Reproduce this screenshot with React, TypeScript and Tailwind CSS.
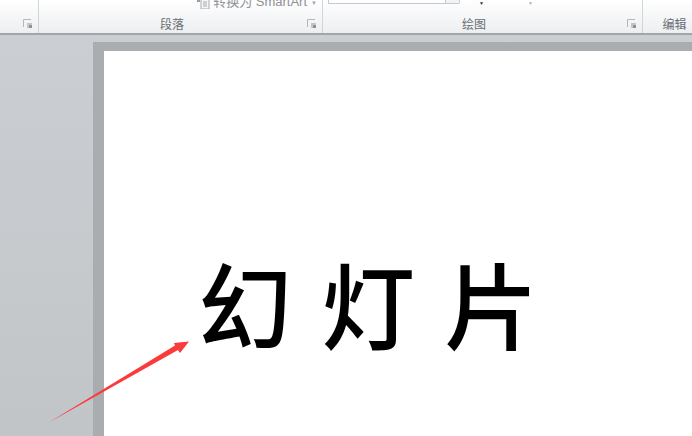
const cjk = "font-['Liberation_Sans','Noto_Sans_CJK_SC',sans-serif]";

function Launcher() {
  return (
    <svg width="10" height="10" viewBox="0 0 10 10" className="shrink-0">
      <path d="M0.5 8V0.5H8" fill="none" stroke="#b5b8bc" strokeWidth="1" />
      <rect x="4" y="4" width="5" height="5" fill="#c4c7ca" />
      <rect x="6" y="6" width="3" height="3" fill="#8f9396" />
    </svg>
  );
}

function GroupLabel({ label, launcher = true, shift = "" }: { label?: string; launcher?: boolean; shift?: string }) {
  return (
    <div className={`relative flex h-[16px] shrink-0 items-center justify-center ${shift}`}>
      {label && <span className="text-[12px] leading-none text-[#6a6f76]">{label}</span>}
      {launcher && (
        <span className="absolute right-[5px] top-[2px] flex">
          <Launcher />
        </span>
      )}
    </div>
  );
}

export default function App() {
  return (
    <div className={`relative flex h-[436px] w-[692px] flex-col overflow-hidden bg-[#c8cbce] ${cjk}`}>
      <header className="flex h-[33px] shrink-0 overflow-hidden bg-gradient-to-b from-[#ffffff] to-[#eceef0]">
        <section className="flex w-[39px] flex-col justify-end border-r border-[#d2d5d8]">
          <GroupLabel />
        </section>
        <section className="flex w-[284px] flex-col justify-end border-r border-[#d2d5d8]">
          <div className="flex h-[9px] items-end justify-end gap-[3px] overflow-hidden pr-[5px]">
            <svg width="13" height="13" viewBox="0 0 13 13" className="mb-[-1px] shrink-0">
              <rect x="4" y="1" width="8" height="11" fill="#f4f5f6" stroke="#a8abae" />
              <rect x="0" y="3" width="3" height="2" fill="#9a9da1" />
              <path d="M6 5h4M6 7h4M6 9h4" stroke="#a8abae" />
            </svg>
            <span className="whitespace-nowrap text-[13px] leading-[15px] text-[#8e9196]">转换为 SmartArt</span>
            <span className="ml-[1px] mb-[3px] text-[6px] leading-none text-[#a3a6a9]">▼</span>
          </div>
          <div className="h-[8px]" />
          <GroupLabel label="段落" shift="pr-[17px]" />
        </section>
        <section className="flex w-[320px] flex-col justify-end border-r border-[#d2d5d8]">
          <div className="flex h-[9px] items-start">
            <div className="ml-[5px] h-[4px] w-[118px] rounded-b-[1px] border border-t-0 border-[#c6c9cc] bg-white" />
            <div className="h-[4px] w-[14px] rounded-br-[2px] border border-l-0 border-t-0 border-[#c6c9cc] bg-[#f2f3f4]" />
            <span className="ml-[19px] mt-[1px] text-[5px] leading-none text-[#333333]">▼</span>
            <span className="ml-[44px] mt-[1px] text-[5px] leading-none text-[#b0b3b6]">▼</span>
          </div>
          <div className="h-[8px]" />
          <GroupLabel label="绘图" shift="pr-[17px]" />
        </section>
        <section className="flex flex-1 flex-col justify-end">
          <GroupLabel label="编辑" launcher={false} shift="pl-[14px]" />
        </section>
      </header>
      <div className="h-[2px] shrink-0 bg-[#a3a6a9]" />
      <main className="flex min-h-0 flex-1 flex-col bg-gradient-to-b from-[#cbced2] to-[#c2c5c8] pl-[93px] pt-[7px]">
        <div className="flex-1 bg-[#aaadb0] pl-[11px] pt-[9px]">
          <div className="flex h-full flex-col items-start bg-white pl-[94px] pt-[202px]">
            <h1 className="whitespace-pre text-[94px] font-medium leading-[116px] tracking-[1.5px] text-black">幻 灯 片</h1>
          </div>
        </div>
      </main>
      <svg width="692" height="436" viewBox="0 0 692 436" className="pointer-events-none absolute left-0 top-0">
        <path d="M48 423 L175 345.5 L174 343 L189 341.5 L180 353 L178 350 Z" fill="#fb3a3a" />
      </svg>
    </div>
  );
}
